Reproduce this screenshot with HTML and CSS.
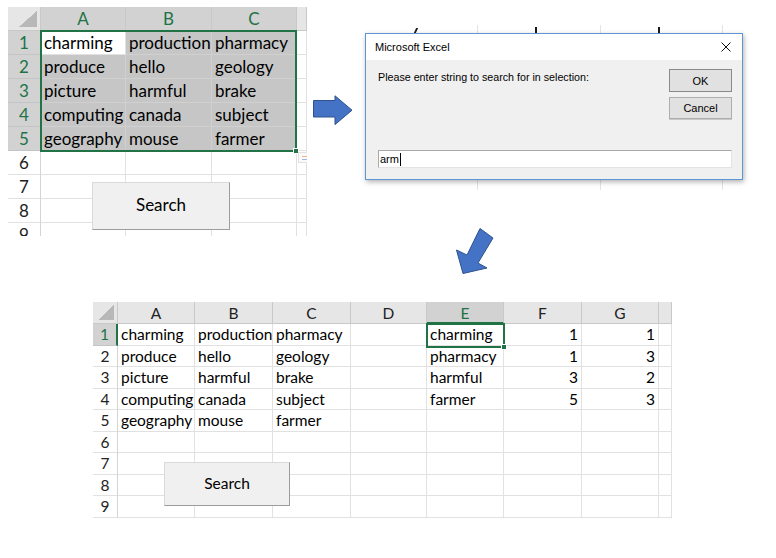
FILE: index.html
```html
<!DOCTYPE html>
<html>
<head>
<meta charset="utf-8">
<title>Excel search</title>
<link rel="stylesheet" href="styles.css">
</head>
<body>
<div class="page">
  <div class="top">
    <div class="sheet sheet-top">
      <div class="grid grid-top">
        <div class="corner"></div><div class="ch sel">A</div><div class="ch sel">B</div><div class="ch sel">C</div><div class="ch"></div>
        <div class="rh sel">1</div><div class="c">charming</div><div class="c s">production</div><div class="c s">pharmacy</div><div class="c"></div>
        <div class="rh sel">2</div><div class="c s">produce</div><div class="c s">hello</div><div class="c s">geology</div><div class="c"></div>
        <div class="rh sel">3</div><div class="c s">picture</div><div class="c s">harmful</div><div class="c s">brake</div><div class="c"></div>
        <div class="rh sel">4</div><div class="c s">computing</div><div class="c s">canada</div><div class="c s">subject</div><div class="c"></div>
        <div class="rh sel">5</div><div class="c s">geography</div><div class="c s">mouse</div><div class="c s">farmer</div><div class="c"></div>
        <div class="rh">6</div><div class="c"></div><div class="c"></div><div class="c"></div><div class="c"></div>
        <div class="rh">7</div><div class="c"></div><div class="c"></div><div class="c"></div><div class="c"></div>
        <div class="rh">8</div><div class="c"></div><div class="c"></div><div class="c"></div><div class="c"></div>
        <div class="rh">9</div><div class="c"></div><div class="c"></div><div class="c"></div><div class="c"></div>
      </div>
      <div class="selection-top"></div>
      <div class="qa-icon"><span class="qa-a"></span><span class="qa-b"></span></div>
      <div class="xl-btn btn-top">Search</div>
    </div>

    <svg class="arrow-right" width="40" height="31" viewBox="0 0 40 31">
      <polygon points="0.5,5.5 22,5.5 22,0.8 39,15.2 22,29.6 22,22 0.5,22" fill="#4472c4" stroke="#2f528f" stroke-width="1"/>
    </svg>

    <div class="right-col">
      <div class="dialog-area">
        <span class="frag frag-y"></span><span class="frag frag-1"></span><span class="frag frag-2"></span>
        <div class="dialog">
          <div class="dlg-title">
            <span>Microsoft Excel</span>
            <svg class="dlg-close" width="10" height="10" viewBox="0 0 10 10">
              <path d="M0.5 0.5 L9.5 9.5 M9.5 0.5 L0.5 9.5" stroke="#111" stroke-width="1" fill="none"/>
            </svg>
          </div>
          <div class="dlg-body">
            <div class="dlg-row">
              <div class="dlg-prompt">Please enter string to search for in selection:</div>
              <div class="dlg-buttons">
                <div class="dlg-btn dlg-ok">OK</div>
                <div class="dlg-btn dlg-cancel">Cancel</div>
              </div>
            </div>
            <div class="dlg-input"><span>arm</span><span class="caret"></span></div>
          </div>
        </div>
      </div>
      <svg class="arrow-down" width="40" height="48" viewBox="0 0 40 48">
        <polygon points="25,1.5 38,11 23,36 32,41 8,46.5 1.5,23 12,28" fill="#4472c4" stroke="#2f528f" stroke-width="1" stroke-linejoin="miter"/>
      </svg>
    </div>
  </div>

  <div class="sheet sheet-bottom">
    <div class="grid grid-bottom">
      <div class="corner"></div><div class="ch">A</div><div class="ch">B</div><div class="ch">C</div><div class="ch">D</div><div class="ch sel">E</div><div class="ch">F</div><div class="ch">G</div><div class="ch"></div>
      <div class="rh sel">1</div><div class="c">charming</div><div class="c">production</div><div class="c">pharmacy</div><div class="c"></div><div class="c">charming</div><div class="c n">1</div><div class="c n">1</div><div class="c"></div>
      <div class="rh">2</div><div class="c">produce</div><div class="c">hello</div><div class="c">geology</div><div class="c"></div><div class="c">pharmacy</div><div class="c n">1</div><div class="c n">3</div><div class="c"></div>
      <div class="rh">3</div><div class="c">picture</div><div class="c">harmful</div><div class="c">brake</div><div class="c"></div><div class="c">harmful</div><div class="c n">3</div><div class="c n">2</div><div class="c"></div>
      <div class="rh">4</div><div class="c">computing</div><div class="c">canada</div><div class="c">subject</div><div class="c"></div><div class="c">farmer</div><div class="c n">5</div><div class="c n">3</div><div class="c"></div>
      <div class="rh">5</div><div class="c">geography</div><div class="c">mouse</div><div class="c">farmer</div><div class="c"></div><div class="c"></div><div class="c"></div><div class="c"></div><div class="c"></div>
      <div class="rh">6</div><div class="c"></div><div class="c"></div><div class="c"></div><div class="c"></div><div class="c"></div><div class="c"></div><div class="c"></div><div class="c"></div>
      <div class="rh">7</div><div class="c"></div><div class="c"></div><div class="c"></div><div class="c"></div><div class="c"></div><div class="c"></div><div class="c"></div><div class="c"></div>
      <div class="rh">8</div><div class="c"></div><div class="c"></div><div class="c"></div><div class="c"></div><div class="c"></div><div class="c"></div><div class="c"></div><div class="c"></div>
      <div class="rh">9</div><div class="c"></div><div class="c"></div><div class="c"></div><div class="c"></div><div class="c"></div><div class="c"></div><div class="c"></div><div class="c"></div>
    </div>
    <div class="active-bottom"></div>
    <div class="xl-btn btn-bottom">Search</div>
  </div>
</div>
</body>
</html>
```

FILE: styles.css
```css
body {
  margin: 0;
  background: #ffffff;
  font-family: Lato, "Liberation Sans", sans-serif;
}

.page {
  width: 776px;
  height: 558px;
  overflow: hidden;
}

.top {
  display: flex;
  align-items: flex-start;
}

/* ---------- spreadsheets ---------- */
.sheet {
  position: relative;
  overflow: hidden;
}

.sheet-top {
  margin: 7px 0 0 8px;
  width: 299px;
  height: 229px;
}

.sheet-bottom {
  margin: 27px 0 0 93px;
  width: 579px;
  height: 216px;
}

.grid {
  display: grid;
  color: #000;
}

.grid-top {
  grid-template-columns: 33px 85px 86px 85px 10px;
  grid-auto-rows: 24px;
  font-size: 17px;
  line-height: 24px;
}

.grid-bottom {
  grid-template-columns: 25px 77px 78px 78px 76px 77px 78px 77px 13px;
  grid-template-rows: 22px;
  grid-auto-rows: 21.5px;
  font-size: 15.5px;
  line-height: 21.5px;
}

.grid > div {
  box-sizing: border-box;
  border-right: 1px solid #e1e1e1;
  border-bottom: 1px solid #e1e1e1;
  white-space: nowrap;
  overflow: hidden;
}

.c {
  padding-left: 3px;
  background: #ffffff;
}

.c.n {
  text-align: right;
  padding: 0 3px 0 0;
}

.c.s {
  background: #c6c6c6;
  border-color: #d0d0d0;
}

.corner {
  position: relative;
  background: #e6e6e6;
  border-color: #c9c9c9 !important;
}

.corner::after {
  content: "";
  position: absolute;
  right: 3px;
  bottom: 3px;
  width: 18px;
  height: 16px;
  background: linear-gradient(to top left, #b8b8b8 50%, transparent 51%);
}

.grid-bottom .corner::after {
  width: 15px;
  height: 15px;
}

.ch {
  text-align: center;
  background: #e6e6e6;
  color: #222;
  border-right-color: #c9c9c9 !important;
  border-bottom-color: #c9c9c9 !important;
}

.grid-bottom .ch {
  line-height: 22px;
}

.ch.sel {
  background: #d2d2d2;
  color: #217346;
}

.grid-bottom .ch.sel {
  border-bottom: 2px solid #217346 !important;
}

.rh {
  text-align: center;
  background: #ffffff;
  color: #222;
  border-right-color: #d4d4d4 !important;
}

.rh.sel {
  background: #d2d2d2;
  color: #217346;
  border-bottom-color: #c4c4c4 !important;
}

.grid-bottom .rh.sel {
  border-right: 2px solid #217346 !important;
}

.selection-top {
  position: absolute;
  left: 32px;
  top: 23px;
  width: 257px;
  height: 122px;
  box-sizing: border-box;
  border: 2px solid #217346;
}

.selection-top::after,
.active-bottom::after {
  content: "";
  position: absolute;
  right: -4px;
  bottom: -4px;
  width: 4px;
  height: 4px;
  background: #217346;
  border: 1px solid #ffffff;
}

.active-bottom {
  position: absolute;
  left: 333px;
  top: 21px;
  width: 79px;
  height: 25px;
  box-sizing: border-box;
  border: 2px solid #217346;
}

.qa-icon {
  position: absolute;
  left: 290px;
  top: 145px;
  width: 13px;
  height: 11px;
  box-sizing: border-box;
  border: 1px solid #e2e2e2;
  background: #fafafa;
}

.qa-icon span {
  position: absolute;
  left: 3px;
  height: 1px;
  width: 7px;
}

.qa-a { top: 3px; background: #f0b58a; }
.qa-b { top: 6px; background: #9fb8dc; }

.xl-btn {
  position: absolute;
  box-sizing: border-box;
  display: flex;
  align-items: center;
  justify-content: center;
  background: #f0f0f0;
  border: 1px solid;
  border-color: #dadada #9c9c9c #9c9c9c #dadada;
  color: #000;
}

.btn-top {
  left: 84px;
  top: 175px;
  width: 138px;
  height: 48px;
  font-size: 17px;
  padding-bottom: 3px;
}

.btn-bottom {
  left: 71px;
  top: 160px;
  width: 126px;
  height: 44px;
  font-size: 15.5px;
  padding-bottom: 2px;
}

/* ---------- arrows ---------- */
.arrow-right {
  display: block;
  margin: 95px 0 0 6px;
}

.right-col {
  margin-left: 7px;
}

.arrow-down {
  display: block;
  margin: 37px 0 0 95px;
}

/* ---------- dialog ---------- */
.dialog-area {
  position: relative;
  margin-top: 25px;
  width: 390px;
  height: 165px;
  box-sizing: border-box;
  padding: 8px 0 0 5px;
  background-image:
    linear-gradient(to right, transparent 117px, #e4e4e4 117px, #e4e4e4 118px, transparent 118px),
    linear-gradient(to right, transparent 240px, #e4e4e4 240px, #e4e4e4 241px, transparent 241px),
    linear-gradient(to right, transparent 362px, #e4e4e4 362px, #e4e4e4 363px, transparent 363px);
}

.frag {
  position: absolute;
  background: #1a1a1a;
}

.frag-y {
  left: 55px;
  top: 3px;
  width: 2px;
  height: 5px;
  transform: skewX(-25deg);
}

.frag-1 {
  left: 175px;
  top: 2px;
  width: 2px;
  height: 6px;
}

.frag-2 {
  left: 298px;
  top: 2px;
  width: 2px;
  height: 6px;
}

.dialog {
  position: relative;
  width: 378px;
  height: 147px;
  box-sizing: border-box;
  border: 1px solid #5e96d4;
  background: #f0f0f0;
  box-shadow: 1px 2px 5px rgba(0, 0, 0, 0.3);
  font-family: "Liberation Sans", Arial, sans-serif;
  color: #000;
  display: flex;
  flex-direction: column;
}

.dlg-title {
  height: 26px;
  background: #ffffff;
  display: flex;
  align-items: center;
  justify-content: space-between;
  padding: 0 11px 0 9px;
  font-size: 11px;
}

.dlg-close {
  display: block;
}

.dlg-body {
  flex: 1;
  padding: 9px 10px 0 12px;
}

.dlg-row {
  display: flex;
  justify-content: space-between;
}

.dlg-prompt {
  font-size: 10.7px;
  margin-top: 2px;
}

.dlg-buttons {
  display: flex;
  flex-direction: column;
  gap: 5px;
  width: 63px;
}

.dlg-btn {
  box-sizing: border-box;
  display: flex;
  align-items: center;
  justify-content: center;
  background: #e1e1e1;
  border: 1px solid #adadad;
  font-size: 11px;
}

.dlg-ok {
  height: 23px;
  border-color: #8a8a8a;
}

.dlg-cancel {
  height: 22px;
  box-shadow: 0 1px 0 #c8c8c8;
}

.dlg-input {
  margin-top: 31px;
  height: 18px;
  box-sizing: border-box;
  background: #ffffff;
  border: 1px solid #a9a9a9;
  border-right-color: #e3e3e3;
  border-bottom-color: #e3e3e3;
  font-size: 11px;
  line-height: 16px;
  padding-left: 1px;
  display: flex;
  align-items: center;
}

.caret {
  display: inline-block;
  width: 1px;
  height: 13px;
  background: #000;
  margin-left: 1px;
}
```
